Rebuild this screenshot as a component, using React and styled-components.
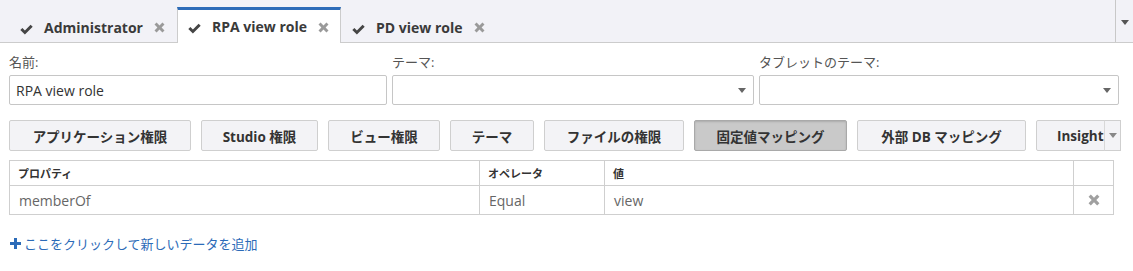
import React from 'react'
import styled, { createGlobalStyle } from 'styled-components'

const GlobalStyle = createGlobalStyle`
  body {
    margin: 0;
    background: #ffffff;
    font-family: "Open Sans", "Noto Sans CJK JP", sans-serif;
    color: #333;
  }
`

const tabs = [
  { label: 'Administrator' },
  { label: 'RPA view role', active: true },
  { label: 'PD view role' },
]

const buttons = [
  { label: 'アプリケーション権限', width: 182 },
  { label: 'Studio 権限', width: 117 },
  { label: 'ビュー権限', width: 112 },
  { label: 'テーマ', width: 84 },
  { label: 'ファイルの権限', width: 140 },
  { label: '固定値マッピング', width: 153, active: true },
  { label: '外部 DB マッピング', width: 169 },
  { label: 'Insight', width: 120, clipped: true },
]

function Check() {
  return (
    <svg width="13" height="11" viewBox="0 0 13 11">
      <path d="M0.3 6 L2.4 3.9 L4.9 6.4 L10.6 0.7 L12.7 2.8 L4.9 10.6 Z" fill="#454545" />
    </svg>
  )
}

function Cross({ color = '#9a9a9a', size = 11 }) {
  return (
    <svg width={size} height={size} viewBox="0 0 11 11">
      <path
        d="M0.5 2.6 L2.6 0.5 L5.5 3.4 L8.4 0.5 L10.5 2.6 L7.6 5.5 L10.5 8.4 L8.4 10.5 L5.5 7.6 L2.6 10.5 L0.5 8.4 L3.4 5.5 Z"
        fill={color}
      />
    </svg>
  )
}

function Caret() {
  return (
    <svg width="8" height="5" viewBox="0 0 8 5">
      <path d="M0 0 L8 0 L4 5 Z" fill="#555" />
    </svg>
  )
}

function Plus() {
  return (
    <svg width="11" height="11" viewBox="0 0 11 11">
      <path d="M4 0 H7 V4 H11 V7 H7 V11 H4 V7 H0 V4 H4 Z" fill="#2c6bb8" />
    </svg>
  )
}

export default function App() {
  return (
    <Page>
      <GlobalStyle />
      <TabBar>
        <TabList>
          {tabs.map((t) => (
            <Tab key={t.label} $active={t.active}>
              <CheckWrap>
                <Check />
              </CheckWrap>
              <TabLabel>{t.label}</TabLabel>
              <Cross />
            </Tab>
          ))}
        </TabList>
        <TabMenu>
          <Caret />
        </TabMenu>
      </TabBar>

      <Content>
        <FormRow>
          <Field $width={378}>
            <Label>名前:</Label>
            <TextInput>RPA view role</TextInput>
          </Field>
          <Field $width={362}>
            <Label>テーマ:</Label>
            <Select>
              <Caret />
            </Select>
          </Field>
          <Field $width={360}>
            <Label>タブレットのテーマ:</Label>
            <Select>
              <Caret />
            </Select>
          </Field>
        </FormRow>

        <ButtonStrip>
          <ButtonScroller>
            {buttons.map((b) => (
              <Button key={b.label} $active={b.active} $width={b.width} $clipped={b.clipped}>
                {b.label}
              </Button>
            ))}
          </ButtonScroller>
          <StripToggle>
            <Caret />
          </StripToggle>
        </ButtonStrip>

        <Table>
          <colgroup>
            <col style={{ width: 470 }} />
            <col style={{ width: 125 }} />
            <col style={{ width: 469 }} />
            <col style={{ width: 40 }} />
          </colgroup>
          <thead>
            <tr>
              <Th>プロパティ</Th>
              <Th>オペレータ</Th>
              <Th>値</Th>
              <Th />
            </tr>
          </thead>
          <tbody>
            <tr>
              <Td>memberOf</Td>
              <Td>Equal</Td>
              <Td>view</Td>
              <ActionTd>
                <Cross color="#a0a0a0" size={12} />
              </ActionTd>
            </tr>
          </tbody>
        </Table>

        <AddLink>
          <Plus />
          <span>ここをクリックして新しいデータを追加</span>
        </AddLink>
      </Content>
    </Page>
  )
}

const Page = styled.div`
  width: 1133px;
  height: 271px;
  overflow: hidden;
  background: #fff;
`

const TabBar = styled.div`
  display: flex;
  height: 42px;
  background: #f2f2f7;
  border-bottom: 1px solid #cccccc;
`

const TabList = styled.div`
  flex: 1;
  display: flex;
  align-items: flex-end;
  padding-left: 9px;
`

const Tab = styled.div`
  display: flex;
  align-items: center;
  gap: 11px;
  height: 31px;
  padding: 1px 11px 0 10px;
  margin-bottom: -1px;
  border: 1px solid transparent;
  border-bottom: none;
  border-top: 3px solid transparent;
  font-size: 14px;
  font-weight: 700;
  color: #3a3a3a;
  ${(p) =>
    p.$active &&
    `
    background: #ffffff;
    border-color: #cccccc;
    border-top-color: #2d6cb8;
    height: 32px;
  `}
`

const CheckWrap = styled.span`
  display: flex;
  margin-top: 3px;
`

const TabLabel = styled.span`
  white-space: nowrap;
  margin-top: -1px;
`

const TabMenu = styled.div`
  width: 17px;
  border-left: 1px solid #c8c8c8;
  display: flex;
  align-items: center;
  justify-content: center;
  padding-top: 2px;
`

const Content = styled.div`
  padding: 10px 0 0 9px;
`

const FormRow = styled.div`
  display: flex;
  gap: 5px;
`

const Field = styled.div`
  width: ${(p) => p.$width}px;
  display: flex;
  flex-direction: column;
`

const Label = styled.div`
  font-size: 13px;
  color: #555;
  height: 18px;
  line-height: 18px;
  margin-bottom: 4px;
`

const TextInput = styled.div`
  box-sizing: border-box;
  height: 30px;
  border: 1px solid #c6c6c6;
  border-radius: 2px;
  padding: 0 6px;
  display: flex;
  align-items: center;
  font-size: 14px;
  color: #333;
`

const Select = styled(TextInput)`
  justify-content: flex-end;
  padding-right: 7px;
  svg path {
    fill: #666;
  }
`

const ButtonStrip = styled.div`
  display: flex;
  margin-top: 15px;
  width: 1112px;
`

const ButtonScroller = styled.div`
  display: flex;
  gap: 10px;
  width: 1095px;
  overflow: hidden;
`

const Button = styled.div`
  flex: 0 0 auto;
  box-sizing: border-box;
  width: ${(p) => p.$width}px;
  height: 31px;
  display: flex;
  align-items: center;
  justify-content: ${(p) => (p.$clipped ? 'flex-start' : 'center')};
  padding-left: ${(p) => (p.$clipped ? '20px' : '0')};
  white-space: nowrap;
  font-size: 13.5px;
  font-weight: 700;
  color: #333;
  background: ${(p) => (p.$active ? '#c9c9c9' : '#f3f3f6')};
  border: 1px solid ${(p) => (p.$active ? '#a9a9a9' : '#cfcfcf')};
  border-radius: 2px;
  box-shadow: ${(p) => (p.$active ? 'inset 0 1px 2px rgba(0,0,0,0.15)' : 'none')};
`

const StripToggle = styled.div`
  box-sizing: border-box;
  width: 17px;
  height: 31px;
  display: flex;
  align-items: center;
  justify-content: center;
  background: #f3f3f6;
  border: 1px solid #cfcfcf;
  border-left: 1px solid #d8d8d8;
  svg path {
    fill: #888;
  }
`

const Table = styled.table`
  margin-top: 9px;
  width: 1104px;
  border-collapse: collapse;
  table-layout: fixed;
`

const Th = styled.th`
  height: 24px;
  padding: 0 8px;
  border: 1px solid #cfcfcf;
  text-align: left;
  font-size: 11px;
  font-weight: 700;
  color: #333;
`

const Td = styled.td`
  height: 28px;
  padding: 0 9px;
  border: 1px solid #cfcfcf;
  font-size: 14px;
  color: #666;
`

const ActionTd = styled(Td)`
  text-align: center;
  padding: 0;
  svg {
    display: block;
    margin: 0 auto;
  }
`

const AddLink = styled.div`
  display: flex;
  align-items: center;
  gap: 3px;
  margin-top: 19px;
  margin-left: 1px;
  font-size: 13px;
  color: #2c6bb8;
`
